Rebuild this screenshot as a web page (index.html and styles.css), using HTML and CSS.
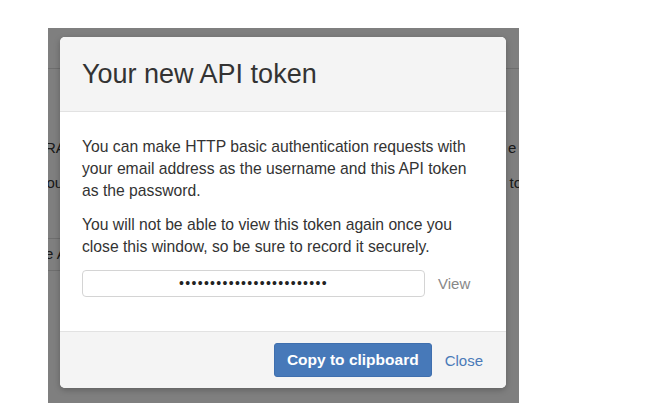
FILE: index.html
```html
<!DOCTYPE html>
<html lang="en">
<head>
    <meta charset="UTF-8">
    <title>Your new API token</title>
    <link rel="stylesheet" href="styles.css">
</head>
<body>
    <div class="screen">
        <div class="page">
            <div class="page-head"></div>
            <div class="page-row row-one">
                <span class="cut-left">RA</span>
                <span class="cut-right">e it</span>
            </div>
            <div class="page-row row-two">
                <span class="cut-left">you</span>
                <span class="cut-right">to</span>
            </div>
            <div class="page-box">
                <span class="cut-left">e API</span>
            </div>
        </div>

        <div class="overlay"></div>

        <div class="modal">
            <div class="modal-header">
                <h2>Your new API token</h2>
            </div>
            <div class="modal-body">
                <p>You can make HTTP basic authentication requests with your email address as the username and this API token as the password.</p>
                <p>You will not be able to view this token again once you close this window, so be sure to record it securely.</p>
                <div class="token-row">
                    <div class="token-field">••••••••••••••••••••••••</div>
                    <a class="view-link">View</a>
                </div>
            </div>
            <div class="modal-footer">
                <button class="btn-primary">Copy to clipboard</button>
                <a class="close-link">Close</a>
            </div>
        </div>
    </div>
</body>
</html>
```

FILE: styles.css
```css
body {
    margin: 0;
    background-color: #fff;
    font-family: "Liberation Sans", Arial, Helvetica, sans-serif;
    color: #333;
}
.screen {
    position: relative;
    overflow: hidden;
    width: 471px;
    height: 375px;
    margin: 28px 0 0 48px;
    background-color: #fff;
}
.page {
    font-size: 15px;
    line-height: 20px;
    color: #333;
}
.page-head {
    height: 40px;
    border-bottom: 1px solid #ddd;
}
.page-row {
    display: flex;
    justify-content: space-between;
}
.row-one {
    margin-top: 69px;
}
.row-two {
    margin-top: 15px;
}
.row-one .cut-left {
    margin-left: -3px;
}
.row-one .cut-right {
    margin-right: -9px;
}
.row-two .cut-left {
    margin-left: -9px;
}
.row-two .cut-right {
    margin-right: -3px;
}
.page-box {
    width: 220px;
    margin-top: 45px;
    padding: 5px 0 6px;
    border-top: 1px solid #ddd;
    border-bottom: 1px solid #ddd;
}
.page-box .cut-left {
    margin-left: -3px;
}
.overlay {
    position: absolute;
    top: 0;
    left: 0;
    right: 0;
    bottom: 0;
    background-color: rgba(0, 0, 0, 0.5);
}
.modal {
    position: absolute;
    top: 9px;
    left: 12px;
    width: 446px;
    background-color: #fff;
    border-radius: 5px;
    box-shadow: 0 2px 6px rgba(0, 0, 0, 0.25);
    overflow: hidden;
}
.modal-header {
    background-color: #f4f4f4;
    border-bottom: 1px solid #e2e2e2;
    padding: 22px 22px;
}
.modal-header h2 {
    margin: 0;
    font-size: 27px;
    line-height: 30px;
    font-weight: normal;
    color: #333;
}
.modal-body {
    padding: 24px 30px 34px 22px;
    font-size: 15.7px;
    line-height: 22px;
}
.modal-body p {
    margin: 0 0 12px;
}
.token-row {
    display: flex;
    align-items: center;
    gap: 13px;
    margin-top: 11px;
}
.token-field {
    flex: none;
    width: 341px;
    height: 25px;
    border: 1px solid #d4d4d4;
    border-radius: 4px;
    text-align: center;
    font-size: 14px;
    line-height: 25px;
    letter-spacing: 1.3px;
    color: #222;
}
.view-link {
    color: #888;
    font-size: 15px;
}
.modal-footer {
    display: flex;
    justify-content: flex-end;
    align-items: center;
    gap: 13px;
    background-color: #f4f4f4;
    border-top: 1px solid #e2e2e2;
    padding: 11px 23px 11px;
}
.btn-primary {
    height: 34px;
    padding: 0 12px;
    border: 1px solid #3f6fae;
    border-radius: 3px;
    background-color: #4779b9;
    color: #fff;
    font-family: "Liberation Sans", Arial, Helvetica, sans-serif;
    font-size: 15.5px;
    font-weight: bold;
}
.close-link {
    color: #4a7ab8;
    font-size: 15px;
}
```
